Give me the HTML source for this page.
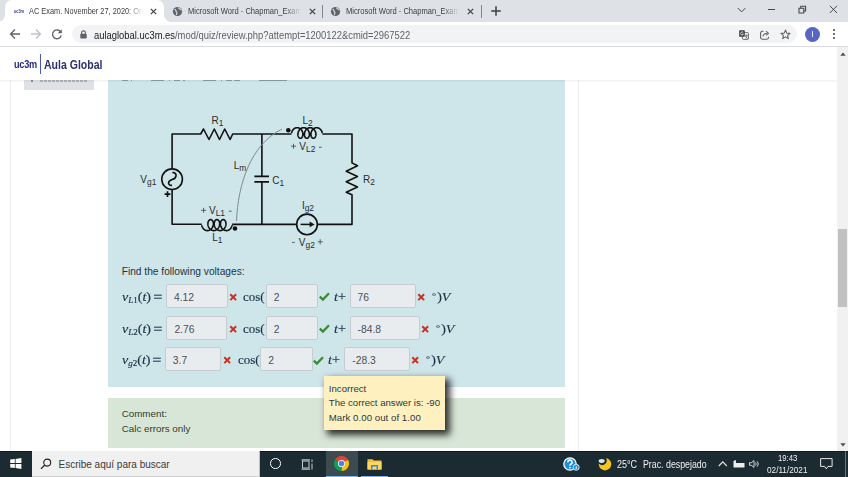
<!DOCTYPE html>
<html><head><meta charset="utf-8">
<style>
*{margin:0;padding:0;box-sizing:border-box}
html,body{width:848px;height:477px;overflow:hidden;background:#fff;font-family:"Liberation Sans",sans-serif;position:relative}
.a{position:absolute}
.clab{line-height:10px;color:#2b2b2b;white-space:nowrap}
.clab sub{font-size:8.4px;vertical-align:-1.8px;line-height:0}
.inp{height:24px;background:#e9ecef;border:1px solid #c5ccd2;border-radius:2px;font-size:10.3px;line-height:25px;padding-left:7px;color:#495057;white-space:nowrap}
.mth{font-family:"Liberation Serif",serif;font-size:12.6px;line-height:16px;color:#163444;transform:scaleX(1.12);transform-origin:0 0;-webkit-text-stroke:0.15px #163444;white-space:nowrap}
.deg{font-size:9px;position:relative;top:-1.5px;margin-right:1px}
.mth sub{font-size:8px;vertical-align:-2px;line-height:0}
.xm,.ck{width:11px;height:9px}
.a svg{display:block}
.tabtxt{font-size:11px;color:#3c4043;white-space:nowrap;overflow:hidden}
</style></head><body>
<!-- tab strip -->
<div class="a" style="left:0;top:0;width:848px;height:22px;background:#dee1e6"></div>
<div class="a" style="left:5px;top:0;width:159px;height:22px;background:#fff;border-radius:7px 7px 0 0"></div>
<div class="a" style="left:-3px;top:14px;width:8px;height:8px;background:radial-gradient(circle at 0 0,#dee1e6 8px,#fff 8px)"></div>
<div class="a" style="left:164px;top:14px;width:8px;height:8px;background:radial-gradient(circle at 100% 0,#dee1e6 8px,#fff 8px)"></div>
<!-- tab1 favicon -->
<div class="a" style="left:13.8px;top:8.6px;font-size:4.6px;line-height:6px;font-weight:bold;color:#3a3f9a;letter-spacing:-0.1px;transform:scaleX(0.85);transform-origin:0 0">uc3m</div>
<div class="a tabtxt" style="left:29px;top:6px;width:140px;font-size:9px;transform:scaleX(0.82);transform-origin:0 0;-webkit-mask-image:linear-gradient(90deg,#000 120px,transparent 140px)">AC Exam. November 27, 2020: Online</div>
<svg class="a" style="left:150px;top:8px" width="7" height="7" viewBox="0 0 7 7"><path d="M0.8 0.8L6.2 6.2M6.2 0.8L0.8 6.2" stroke="#3c4043" stroke-width="1.2"/></svg>
<!-- tab2 -->
<svg class="a" style="left:172px;top:6px" width="11" height="11" viewBox="0 0 11 11"><circle cx="5.5" cy="5.5" r="4.6" fill="#5f6368"/><path d="M2.5 3.2c1 .2 1.6.8 1.4 1.6-.2.7.8 1 1 1.8.2.6-.2 1.6-.7 2.4M6.8 1.5c-.4.8.2 1.4 1 1.4.8 0 1.4.6 1.2 1.4" stroke="#dee1e6" stroke-width="1.1" fill="none"/></svg>
<div class="a tabtxt" style="left:188px;top:6px;width:140px;font-size:9px;color:#3c4043;transform:scaleX(0.84);transform-origin:0 0;-webkit-mask-image:linear-gradient(90deg,#000 115px,transparent 135px)">Microsoft Word - Chapman_Exam</div>
<svg class="a" style="left:308.5px;top:7.5px" width="7" height="7" viewBox="0 0 7 7"><path d="M0.8 0.8L6.2 6.2M6.2 0.8L0.8 6.2" stroke="#3c4043" stroke-width="1.2"/></svg>
<div class="a" style="left:322px;top:5px;width:1px;height:13px;background:#80868b"></div>
<!-- tab3 -->
<svg class="a" style="left:330px;top:6px" width="11" height="11" viewBox="0 0 11 11"><circle cx="5.5" cy="5.5" r="4.6" fill="#5f6368"/><path d="M2.5 3.2c1 .2 1.6.8 1.4 1.6-.2.7.8 1 1 1.8.2.6-.2 1.6-.7 2.4M6.8 1.5c-.4.8.2 1.4 1 1.4.8 0 1.4.6 1.2 1.4" stroke="#dee1e6" stroke-width="1.1" fill="none"/></svg>
<div class="a tabtxt" style="left:346px;top:6px;width:140px;font-size:9px;color:#3c4043;transform:scaleX(0.84);transform-origin:0 0;-webkit-mask-image:linear-gradient(90deg,#000 115px,transparent 135px)">Microsoft Word - Chapman_Exam</div>
<svg class="a" style="left:466.5px;top:7.5px" width="7" height="7" viewBox="0 0 7 7"><path d="M0.8 0.8L6.2 6.2M6.2 0.8L0.8 6.2" stroke="#3c4043" stroke-width="1.2"/></svg>
<div class="a" style="left:481px;top:5px;width:1px;height:13px;background:#80868b"></div>
<svg class="a" style="left:490px;top:5px" width="12" height="12" viewBox="0 0 12 12"><path d="M6 1.2V10.8M1.2 6H10.8" stroke="#3c4043" stroke-width="1.5"/></svg>
<!-- window controls -->
<svg class="a" style="left:737px;top:7px" width="9" height="6" viewBox="0 0 9 6"><path d="M0.9 1.1L4.6 4.9L8.3 1.1" stroke="#45494d" stroke-width="1" fill="none"/></svg>
<div class="a" style="left:768.3px;top:9px;width:7.2px;height:1.1px;background:#45494d"></div>
<svg class="a" style="left:798px;top:5px" width="9" height="9" viewBox="0 0 9 9"><path d="M1 3.2h4.8V8H1z" stroke="#45494d" stroke-width="1.1" fill="none"/><path d="M2.8 3.2V1.2h4.8V6H5.8" stroke="#45494d" stroke-width="1.1" fill="none"/></svg>
<svg class="a" style="left:828.5px;top:5px" width="9" height="9" viewBox="0 0 9 9"><path d="M0.8 0.8L8 8M8 0.8L0.8 8" stroke="#45494d" stroke-width="1"/></svg>
<!-- toolbar -->
<div class="a" style="left:0;top:22px;width:848px;height:24px;background:#fff"></div>
<svg class="a" style="left:9px;top:28px" width="12" height="12" viewBox="0 0 12 12"><path d="M11 6H1.8M6 1.5L1.5 6L6 10.5" stroke="#5f6368" stroke-width="1.3" fill="none"/></svg>
<svg class="a" style="left:30px;top:28px" width="12" height="12" viewBox="0 0 12 12"><path d="M1 6H10.2M6 1.5L10.5 6L6 10.5" stroke="#bdc1c6" stroke-width="1.3" fill="none"/></svg>
<svg class="a" style="left:51px;top:28px" width="12" height="12" viewBox="0 0 12 12"><path d="M9.8 4.2A4.4 4.4 0 1 0 10.2 7.5" stroke="#5f6368" stroke-width="1.3" fill="none"/><path d="M10.8 1.2V5.3H6.7z" fill="#5f6368"/></svg>
<div class="a" style="left:72px;top:25px;width:725px;height:18px;background:#f1f3f4;border-radius:9px"></div>
<svg class="a" style="left:80px;top:30px" width="7" height="9" viewBox="0 0 7 9"><path d="M1.6 4V2.8a1.9 1.9 0 0 1 3.8 0V4" stroke="#5f6368" stroke-width="1.1" fill="none"/><rect x="0.3" y="3.8" width="6.4" height="4.6" rx="0.6" fill="#5f6368"/></svg>
<div class="a" style="left:94px;top:30px;font-size:10px;white-space:nowrap;color:#5f6368;transform:scaleX(0.94);transform-origin:0 0"><span style="color:#202124">aulaglobal.uc3m.es</span>/mod/quiz/review.php?attempt=1200122&amp;cmid=2967522</div>
<!-- translate icon -->
<svg class="a" style="left:738.5px;top:29.5px" width="10" height="10" viewBox="0 0 10 10"><rect x="3.6" y="2.6" width="5.8" height="6.8" rx="0.6" fill="#fff" stroke="#6a6e72" stroke-width="1"/><rect x="0.2" y="0.2" width="5.6" height="6.6" rx="0.6" fill="#3c4043"/><path d="M4.3 2.6A1.5 1.5 0 1 0 4.4 4.2H3" stroke="#fff" stroke-width="0.8" fill="none"/><path d="M6 5.2H8.6M7.3 4.6V5.2M6.6 8.4C7.6 7.6 8.1 6.6 8.2 5.2M6.4 6.2C6.9 7.4 7.6 8.1 8.6 8.5" stroke="#3c4043" stroke-width="0.7" fill="none"/></svg>
<!-- share icon -->
<svg class="a" style="left:759.5px;top:29.8px" width="10" height="10" viewBox="0 0 10 10"><path d="M3.6 1.3H2.2A1.6 1.6 0 0 0 0.6 2.9V7.6A1.6 1.6 0 0 0 2.2 9.2H6.9A1.6 1.6 0 0 0 8.5 7.6V6.8" stroke="#5f6368" stroke-width="1.1" fill="none"/><path d="M3 6.4C3.3 4.4 4.7 3.3 7.3 3.3M6 1.2L8.5 3.3L6 5.4" stroke="#5f6368" stroke-width="1.1" fill="none" stroke-linejoin="round"/></svg>
<!-- star -->
<svg class="a" style="left:780px;top:28.5px" width="11" height="11" viewBox="0 0 11 11"><path d="M5.5 1.1L6.8 4.1 10 4.3 7.6 6.4 8.3 9.6 5.5 7.9 2.7 9.6 3.4 6.4 1 4.3 4.2 4.1Z" stroke="#5f6368" stroke-width="1.1" fill="none" stroke-linejoin="round"/></svg>
<!-- profile -->
<div class="a" style="left:805px;top:27px;width:15px;height:15px;border-radius:50%;background:#5865c2"></div>
<div class="a" style="left:812px;top:31px;width:1px;height:6px;background:#e8eaf6"></div>
<!-- menu dots -->
<div class="a" style="left:832.5px;top:29px;width:2px;height:2px;border-radius:1px;background:#3c4043"></div>
<div class="a" style="left:832.5px;top:33px;width:2px;height:2px;border-radius:1px;background:#3c4043"></div>
<div class="a" style="left:832.5px;top:37px;width:2px;height:2px;border-radius:1px;background:#3c4043"></div>
<div class="a" style="left:0;top:46px;width:848px;height:1px;background:#dadce0"></div>
<!-- page -->
<div class="a" style="left:10px;top:47px;width:1px;height:404px;background:#eeeeee"></div>
<div class="a" style="left:578px;top:80px;width:1px;height:371px;background:#efefef"></div>
<div class="a" style="left:24px;top:70px;width:70px;height:20px;background:#dee2e6"></div>
<div class="a" style="left:108px;top:80px;width:457px;height:306.6px;background:#cee5ea"></div>
<div class="a" style="left:108px;top:398px;width:457px;height:49.5px;background:#d8e6d8"></div>
<!-- circuit -->
<svg class="a" style="left:0;top:0" width="848" height="477" viewBox="0 0 848 477">
<path fill="none" stroke="#111" stroke-width="1.6" stroke-linejoin="round" d="M172.1,168.8 V134 H200.7 L203.5,129 L209,139.5 L214.3,129 L219.5,139.5 L224.7,129 L230.1,139.5 L232.7,134 H291.52"/>
<path fill="none" stroke="#111" stroke-width="1.6" stroke-linejoin="round" d="M322.29,134 H352 V162.9 L357.5,165.8 L346.2,171.2 L357.5,176.5 L346.2,181.7 L357.5,187 L346.2,192.2 L352,194.8 V224.4 H317.9"/>
<path fill="none" stroke="#111" stroke-width="1.6" stroke-linejoin="round" d="M296,224.4 H232.12"/>
<path fill="none" stroke="#111" stroke-width="1.6" stroke-linejoin="round" d="M201.73,224.2 H172.1 V189.8"/>
<path fill="none" stroke="#111" stroke-width="1.6" stroke-linejoin="round" d="M261.9,134 V176.4 M261.9,181.9 V224.4"/>
<path fill="none" stroke="#111" stroke-width="1.6" stroke-linejoin="round" d="M254.4,176.4 H269 M254.4,181.9 H269"/>
<path fill="none" stroke="#111" stroke-width="1.6" stroke-linejoin="round" d="M201.73,225.10 L201.85,225.65 L202.01,226.19 L202.22,226.72 L202.46,227.24 L202.74,227.74 L203.06,228.20 L203.42,228.64 L203.80,229.04 L204.22,229.41 L204.66,229.73 L205.12,230.00 L205.60,230.23 L206.10,230.40 L206.61,230.52 L207.13,230.59 L207.65,230.60 L208.17,230.55 L208.68,230.46 L209.18,230.31 L209.67,230.10 L210.15,229.85 L210.60,229.55 L211.02,229.20 L211.42,228.82 L211.79,228.40 L212.12,227.94 L212.42,227.46 L212.68,226.95 L212.90,226.42 L213.09,225.88 L213.22,225.34 L213.32,224.79 L213.38,224.24 L213.39,223.70 L213.36,223.18 L213.30,222.67 L213.19,222.19 L213.05,221.74 L212.88,221.32 L212.68,220.94 L212.45,220.60 L212.19,220.31 L211.92,220.06 L211.63,219.87 L211.32,219.73 L211.01,219.64 L210.69,219.60 L210.37,219.62 L210.05,219.69 L209.74,219.82 L209.45,220.00 L209.17,220.24 L208.91,220.52 L208.67,220.84 L208.46,221.21 L208.28,221.62 L208.13,222.06 L208.01,222.53 L207.94,223.03 L207.90,223.55 L207.90,224.08 L207.94,224.63 L208.03,225.18 L208.15,225.73 L208.32,226.27 L208.53,226.80 L208.78,227.31 L209.07,227.80 L209.39,228.27 L209.75,228.70 L210.14,229.10 L210.56,229.46 L211.01,229.77 L211.47,230.04 L211.96,230.25 L212.46,230.42 L212.97,230.53 L213.49,230.59 L214.01,230.59 L214.52,230.54 L215.04,230.44 L215.54,230.28 L216.02,230.07 L216.49,229.81 L216.94,229.50 L217.37,229.15 L217.76,228.76 L218.12,228.33 L218.45,227.87 L218.75,227.38 L219.00,226.87 L219.22,226.35 L219.39,225.80 L219.52,225.26 L219.61,224.71 L219.66,224.16 L219.67,223.63 L219.64,223.10 L219.57,222.60 L219.46,222.13 L219.31,221.68 L219.14,221.27 L218.93,220.89 L218.70,220.56 L218.44,220.27 L218.16,220.03 L217.87,219.85 L217.56,219.71 L217.24,219.63 L216.92,219.60 L216.61,219.63 L216.29,219.71 L215.98,219.85 L215.69,220.03 L215.41,220.27 L215.15,220.56 L214.92,220.89 L214.71,221.27 L214.54,221.68 L214.39,222.13 L214.28,222.60 L214.21,223.10 L214.18,223.63 L214.19,224.16 L214.23,224.71 L214.33,225.26 L214.46,225.80 L214.63,226.35 L214.85,226.87 L215.10,227.38 L215.40,227.87 L215.73,228.33 L216.09,228.76 L216.48,229.15 L216.91,229.50 L217.35,229.81 L217.82,230.07 L218.31,230.28 L218.81,230.44 L219.33,230.54 L219.84,230.59 L220.36,230.59 L220.88,230.53 L221.39,230.42 L221.89,230.25 L222.38,230.04 L222.84,229.77 L223.29,229.46 L223.71,229.10 L224.10,228.70 L224.46,228.27 L224.78,227.80 L225.07,227.31 L225.32,226.80 L225.53,226.27 L225.70,225.73 L225.82,225.18 L225.91,224.63 L225.95,224.08 L225.95,223.55 L225.91,223.03 L225.84,222.53 L225.72,222.06 L225.57,221.62 L225.39,221.21 L225.18,220.84 L224.94,220.52 L224.68,220.24 L224.40,220.00 L224.11,219.82 L223.80,219.69 L223.48,219.62 L223.16,219.60 L222.84,219.64 L222.53,219.73 L222.22,219.87 L221.93,220.06 L221.66,220.31 L221.40,220.60 L221.17,220.94 L220.97,221.32 L220.80,221.74 L220.66,222.19 L220.55,222.67 L220.49,223.18 L220.46,223.70 L220.47,224.24 L220.53,224.79 L220.63,225.34 L220.76,225.88 L220.94,226.42 L221.17,226.95 L221.43,227.46 L221.72,227.94 L222.06,228.40 L222.43,228.82 L222.83,229.20 L223.25,229.55 L223.70,229.85 L224.18,230.10 L224.67,230.31 L225.17,230.46 L225.68,230.55 L226.20,230.60 L226.72,230.59 L227.24,230.52 L227.75,230.40 L228.24,230.23 L228.73,230.00 L229.19,229.73 L229.63,229.41 L230.05,229.04 L230.43,228.64 L230.79,228.20 L231.11,227.74 L231.39,227.24 L231.63,226.72 L231.84,226.19 L232.00,225.65 L232.12,225.10"/>
<path fill="none" stroke="#111" stroke-width="1.6" stroke-linejoin="round" d="M291.52,133.00 L291.65,132.47 L291.81,131.95 L292.01,131.43 L292.25,130.94 L292.53,130.46 L292.84,130.01 L293.19,129.59 L293.56,129.20 L293.97,128.85 L294.40,128.54 L294.85,128.28 L295.31,128.06 L295.80,127.89 L296.29,127.78 L296.79,127.71 L297.29,127.70 L297.80,127.74 L298.29,127.84 L298.78,127.98 L299.26,128.18 L299.71,128.42 L300.15,128.71 L300.57,129.04 L300.95,129.42 L301.31,129.82 L301.64,130.26 L301.93,130.73 L302.19,131.22 L302.41,131.73 L302.59,132.25 L302.73,132.77 L302.83,133.30 L302.89,133.83 L302.91,134.35 L302.89,134.85 L302.84,135.34 L302.75,135.80 L302.62,136.24 L302.47,136.64 L302.28,137.01 L302.07,137.33 L301.84,137.61 L301.58,137.85 L301.31,138.04 L301.03,138.18 L300.74,138.27 L300.44,138.30 L300.15,138.28 L299.86,138.21 L299.57,138.09 L299.30,137.91 L299.04,137.69 L298.80,137.42 L298.58,137.10 L298.39,136.75 L298.22,136.35 L298.09,135.93 L297.99,135.47 L297.92,134.99 L297.89,134.49 L297.90,133.98 L297.95,133.45 L298.04,132.92 L298.17,132.40 L298.34,131.87 L298.55,131.36 L298.79,130.87 L299.08,130.39 L299.39,129.95 L299.74,129.53 L300.12,129.15 L300.53,128.80 L300.96,128.50 L301.42,128.24 L301.89,128.03 L302.37,127.87 L302.86,127.77 L303.37,127.71 L303.87,127.70 L304.37,127.75 L304.87,127.86 L305.35,128.01 L305.82,128.21 L306.28,128.46 L306.72,128.76 L307.13,129.10 L307.51,129.47 L307.86,129.88 L308.19,130.33 L308.47,130.80 L308.73,131.29 L308.94,131.80 L309.11,132.32 L309.25,132.85 L309.34,133.38 L309.40,133.90 L309.41,134.42 L309.39,134.92 L309.33,135.41 L309.24,135.87 L309.11,136.30 L308.95,136.69 L308.76,137.05 L308.54,137.38 L308.30,137.65 L308.05,137.88 L307.78,138.06 L307.49,138.19 L307.20,138.27 L306.90,138.30 L306.61,138.27 L306.32,138.19 L306.03,138.06 L305.76,137.88 L305.50,137.65 L305.27,137.38 L305.05,137.05 L304.86,136.69 L304.70,136.30 L304.57,135.87 L304.48,135.41 L304.42,134.92 L304.40,134.42 L304.41,133.90 L304.47,133.38 L304.56,132.85 L304.70,132.32 L304.87,131.80 L305.08,131.29 L305.34,130.80 L305.62,130.33 L305.94,129.88 L306.30,129.47 L306.68,129.10 L307.09,128.76 L307.53,128.46 L307.98,128.21 L308.46,128.01 L308.94,127.86 L309.44,127.75 L309.94,127.70 L310.44,127.71 L310.94,127.77 L311.44,127.87 L311.92,128.03 L312.39,128.24 L312.85,128.50 L313.28,128.80 L313.69,129.15 L314.07,129.53 L314.42,129.95 L314.73,130.39 L315.02,130.87 L315.26,131.36 L315.47,131.87 L315.64,132.40 L315.77,132.92 L315.86,133.45 L315.91,133.98 L315.92,134.49 L315.89,134.99 L315.82,135.47 L315.72,135.93 L315.59,136.35 L315.42,136.75 L315.23,137.10 L315.01,137.42 L314.77,137.69 L314.51,137.91 L314.24,138.09 L313.95,138.21 L313.66,138.28 L313.37,138.30 L313.07,138.27 L312.78,138.18 L312.50,138.04 L312.23,137.85 L311.97,137.61 L311.74,137.33 L311.53,137.01 L311.34,136.64 L311.19,136.24 L311.06,135.80 L310.97,135.34 L310.92,134.85 L310.90,134.35 L310.92,133.83 L310.98,133.30 L311.08,132.77 L311.22,132.25 L311.40,131.73 L311.62,131.22 L311.88,130.73 L312.17,130.26 L312.50,129.82 L312.86,129.42 L313.24,129.04 L313.66,128.71 L314.10,128.42 L314.55,128.18 L315.03,127.98 L315.52,127.84 L316.01,127.74 L316.52,127.70 L317.02,127.71 L317.52,127.78 L318.01,127.89 L318.49,128.06 L318.96,128.28 L319.41,128.54 L319.84,128.85 L320.25,129.20 L320.62,129.59 L320.97,130.01 L321.28,130.46 L321.56,130.94 L321.80,131.43 L322.00,131.95 L322.16,132.47 L322.29,133.00"/>
<circle cx="172.1" cy="179.2" r="10.3" fill="none" stroke="#111" stroke-width="1.6" stroke-linejoin="round"/>
<path fill="none" stroke="#111" stroke-width="1.6" d="M172.4,172.4 C177.6,172.8 177,178.2 172.2,179.6 C167.4,181 167.4,185.6 172,185.4"/>
<circle cx="307" cy="224.4" r="10.3" fill="none" stroke="#111" stroke-width="1.6" stroke-linejoin="round"/>
<path stroke="#111" stroke-width="1.5" d="M300.6,224.4 H311"/><path fill="#111" d="M309.6,221.6 L314.6,224.4 L309.6,227.2Z"/>
<circle cx="235" cy="228.5" r="2.3" fill="#111"/><circle cx="288.3" cy="130.3" r="2.3" fill="#111"/>
<path fill="none" stroke="#7f8b8f" stroke-width="1" d="M236.5,221 C238,185 250,145 282,129"/>
<path stroke="#111" stroke-width="1.7" d="M164.6,194.2 H170.4 M167.5,191.3 V197.1"/>
</svg>
<div class="a clab" style="left:211.4px;top:116.1px;font-size:10px">R<sub>1</sub></div>
<div class="a clab" style="left:302.4px;top:115.7px;font-size:10px">L<sub>2</sub></div>
<div class="a clab" style="left:362.9px;top:174.9px;font-size:10px">R<sub>2</sub></div>
<div class="a clab" style="left:272.2px;top:175.6px;font-size:10px">C<sub>1</sub></div>
<div class="a clab" style="left:233.8px;top:160.6px;font-size:10px">L<sub>m</sub></div>
<div class="a clab" style="left:140.3px;top:174.8px;font-size:10px">V<sub>g1</sub></div>
<div class="a clab" style="left:301.9px;top:201.4px;font-size:10px">I<sub>g2</sub></div>
<div class="a clab" style="left:212.3px;top:232.8px;font-size:10px">L<sub>1</sub></div>
<div class="a clab" style="left:209px;top:206.4px;font-size:10px">V<sub>L1</sub></div>
<div class="a clab" style="left:299.3px;top:141.8px;font-size:10px">V<sub>L2</sub></div>
<div class="a clab" style="left:298.8px;top:237.8px;font-size:10px">V<sub>g2</sub></div>
<svg class="a" style="left:0;top:0" width="848" height="477"><path d="M201.1,210.3 H206.1 M203.6,207.8 V212.8" stroke="#4a5255" stroke-width="0.9"/><path d="M228.79999999999998,211.2 H231.6" stroke="#4a5255" stroke-width="0.9"/><path d="M291.0,146.2 H296.0 M293.5,143.7 V148.7" stroke="#4a5255" stroke-width="0.9"/><path d="M319.0,147.2 H321.79999999999995" stroke="#4a5255" stroke-width="0.9"/><path d="M292.0,242.4 H294.79999999999995" stroke="#4a5255" stroke-width="0.9"/><path d="M317.7,241.8 H322.7 M320.2,239.3 V244.3" stroke="#4a5255" stroke-width="0.9"/></svg>
<!-- /circuit -->
<!-- content -->
<div class="a" style="left:121.7px;top:266.3px;font-size:10.2px;line-height:12px;color:#1e3440;white-space:nowrap">Find the following voltages:</div>
<!-- rows -->
<div class="a mth" style="left:121.5px;top:288.6px"><i>v</i><sub><i>L</i>1</sub>(<i>t</i>)</div>
<div class="a inp" style="left:166.0px;top:284.0px;width:62.0px">4.12</div>
<div class="a xm" style="left:228.6px;top:293.1px"><svg width="10" height="9"><path d="M1.3 1.3L7.1 7.1M7.1 1.3L1.3 7.1" stroke="#ca3120" stroke-width="2"/></svg></div>
<div class="a mth" style="left:243.3px;top:288.6px;transform:scaleX(1.03)">cos(</div>
<div class="a inp" style="left:265.8px;top:284.0px;width:51.9px">2</div>
<div class="a ck" style="left:318.8px;top:291.9px"><svg width="11" height="9"><path d="M0.8 4.6L3.9 7.6L10 1.3" stroke="#3b8a36" stroke-width="2.3" fill="none"/></svg></div>
<div class="a mth" style="left:334.0px;top:288.6px"><i>t</i>+</div>
<div class="a inp" style="left:349.5px;top:284.0px;width:66.3px">76</div>
<div class="a xm" style="left:417.0px;top:293.1px"><svg width="10" height="9"><path d="M1.3 1.3L7.1 7.1M7.1 1.3L1.3 7.1" stroke="#ca3120" stroke-width="2"/></svg></div>
<div class="a mth" style="left:431.6px;top:288.6px"><span class="deg">°</span>)<i>V</i></div>
<div class="a mth" style="left:121.5px;top:320.6px"><i>v</i><sub><i>L</i>2</sub>(<i>t</i>)</div>
<div class="a inp" style="left:166.4px;top:316.0px;width:61.0px">2.76</div>
<div class="a xm" style="left:228.7px;top:325.1px"><svg width="10" height="9"><path d="M1.3 1.3L7.1 7.1M7.1 1.3L1.3 7.1" stroke="#ca3120" stroke-width="2"/></svg></div>
<div class="a mth" style="left:243.3px;top:320.6px;transform:scaleX(1.03)">cos(</div>
<div class="a inp" style="left:265.8px;top:316.0px;width:51.9px">2</div>
<div class="a ck" style="left:318.8px;top:323.9px"><svg width="11" height="9"><path d="M0.8 4.6L3.9 7.6L10 1.3" stroke="#3b8a36" stroke-width="2.3" fill="none"/></svg></div>
<div class="a mth" style="left:334.0px;top:320.6px"><i>t</i>+</div>
<div class="a inp" style="left:349.5px;top:316.0px;width:70.3px">-84.8</div>
<div class="a xm" style="left:421.4px;top:325.1px"><svg width="10" height="9"><path d="M1.3 1.3L7.1 7.1M7.1 1.3L1.3 7.1" stroke="#ca3120" stroke-width="2"/></svg></div>
<div class="a mth" style="left:435.6px;top:320.6px"><span class="deg">°</span>)<i>V</i></div>
<div class="a mth" style="left:121.5px;top:351.8px"><i>v</i><sub><i>g</i>2</sub>(<i>t</i>)</div>
<div class="a inp" style="left:164.8px;top:347.2px;width:56.3px">3.7</div>
<div class="a xm" style="left:222.5px;top:356.3px"><svg width="10" height="9"><path d="M1.3 1.3L7.1 7.1M7.1 1.3L1.3 7.1" stroke="#ca3120" stroke-width="2"/></svg></div>
<div class="a mth" style="left:237.7px;top:351.8px;transform:scaleX(1.03)">cos(</div>
<div class="a inp" style="left:260.2px;top:347.2px;width:52.4px">2</div>
<div class="a ck" style="left:312.9px;top:355.5px"><svg width="11" height="9"><path d="M0.8 4.6L3.9 7.6L10 1.3" stroke="#3b8a36" stroke-width="2.3" fill="none"/></svg></div>
<div class="a mth" style="left:328.0px;top:351.8px"><i>t</i>+</div>
<div class="a inp" style="left:344.3px;top:347.2px;width:65.4px">-28.3</div>
<div class="a xm" style="left:411.1px;top:356.3px"><svg width="10" height="9"><path d="M1.3 1.3L7.1 7.1M7.1 1.3L1.3 7.1" stroke="#ca3120" stroke-width="2"/></svg></div>
<div class="a mth" style="left:425.6px;top:351.8px"><span class="deg">°</span>)<i>V</i></div>
<svg class="a" style="left:154.4px;top:293.7px" width="8" height="5"><path d="M0 1.2H7.8M0 4.2H7.8" stroke="#163444" stroke-width="1"/></svg>
<svg class="a" style="left:154.4px;top:325.7px" width="8" height="5"><path d="M0 1.2H7.8M0 4.2H7.8" stroke="#163444" stroke-width="1"/></svg>
<svg class="a" style="left:153.2px;top:356.9px" width="8" height="5"><path d="M0 1.2H7.8M0 4.2H7.8" stroke="#163444" stroke-width="1"/></svg>
<!-- comment -->
<div class="a" style="left:121.7px;top:407px;font-size:9.8px;line-height:14.6px;color:#2f3d30;white-space:nowrap">Comment:<br>Calc errors only</div>
<!-- /content -->
<!-- partial --><div class="a" style="left:122px;top:80px;width:6px;height:1.2px;background:#4a5d66;opacity:.5"></div><div class="a" style="left:130.5px;top:80px;width:1.5px;height:1.2px;background:#4a5d66;opacity:.5"></div><div class="a" style="left:151px;top:80px;width:13px;height:1.2px;background:#4a5d66;opacity:.5"></div><div class="a" style="left:169px;top:80px;width:1px;height:1.2px;background:#4a5d66;opacity:.5"></div><div class="a" style="left:174px;top:80px;width:6px;height:1.2px;background:#4a5d66;opacity:.5"></div><div class="a" style="left:183px;top:80px;width:2px;height:1.2px;background:#4a5d66;opacity:.5"></div><div class="a" style="left:203px;top:80px;width:13px;height:1.2px;background:#4a5d66;opacity:.5"></div><div class="a" style="left:221px;top:80px;width:1px;height:1.2px;background:#4a5d66;opacity:.5"></div><div class="a" style="left:226px;top:80px;width:6px;height:1.2px;background:#4a5d66;opacity:.5"></div><div class="a" style="left:234px;top:80px;width:6px;height:1.2px;background:#4a5d66;opacity:.5"></div><div class="a" style="left:259px;top:80px;width:28px;height:1.2px;background:#4a5d66;opacity:.5"></div><div class="a" style="left:31px;top:80px;width:1.5px;height:2px;background:#555;opacity:.6"></div><div class="a" style="left:40px;top:80px;width:48px;height:1.5px;background:repeating-linear-gradient(90deg,#6a6f74 0 3px,transparent 3px 4px);opacity:.4"></div>
<!-- header -->
<div class="a" style="left:0;top:47px;width:837px;height:33px;background:#fff;box-shadow:0 1px 2px rgba(0,0,0,.08)"></div>
<!-- scrollbar -->
<div class="a" style="left:837px;top:47px;width:11px;height:404px;background:#f1f1f1"></div>
<div class="a" style="left:838px;top:229px;width:9px;height:78px;background:#c1c1c1"></div>
<!-- header content -->
<div class="a" style="left:14px;top:58.6px;font-size:10.2px;font-weight:bold;color:#232d82;letter-spacing:-0.3px;transform:scaleX(0.9);transform-origin:0 0">uc3m</div>
<div class="a" style="left:40px;top:54px;width:1.2px;height:19.5px;background:#4d58a8"></div>
<div class="a" style="left:44px;top:57.3px;font-size:13px;font-weight:bold;color:#2b2f6e;white-space:nowrap;transform:scaleX(0.81);transform-origin:0 0">Aula Global</div>
<!-- tooltip -->
<div class="a" style="left:324px;top:376px;width:121px;height:53.5px;background:#fff1bf;box-shadow:4px 4px 7px 1px rgba(0,0,0,.8)"></div>
<div class="a" style="left:328.8px;top:381.8px;font-size:9.65px;line-height:14.6px;color:#2c3840;white-space:nowrap">Incorrect<br>The correct answer is: -90<br><span style="letter-spacing:0.05px">Mark 0.00 out of 1.00</span></div>
<!-- taskbar -->
<div class="a" style="left:0;top:451px;width:848px;height:26px;background:#1c2b31;border-top:1px solid #0d1b20"></div>
<div class="a" style="left:32px;top:451px;width:228px;height:26px;background:#f0f0f0;border-right:1px solid #bfbfbf;border-bottom:1px solid #cfcfcf"></div>
<svg class="a" style="left:10px;top:458px" width="12" height="11" viewBox="0 0 12 11"><path d="M0.2 1.6L4.8 1V5.1H0.2Z M5.6 0.9L11.4 0.1V5.1H5.6Z M0.2 5.9H4.8V10L0.2 9.4Z M5.6 5.9H11.4V10.9L5.6 10.1Z" fill="#fff"/></svg>
<svg class="a" style="left:39.5px;top:458px" width="12" height="12" viewBox="0 0 12 12"><circle cx="7.2" cy="4.6" r="3.5" stroke="#222" stroke-width="1.1" fill="none"/><path d="M4.7 7.1L1 10.8" stroke="#222" stroke-width="1.3"/></svg>
<div class="a" style="left:58.5px;top:458.5px;font-size:10px;color:#3a3a3a;white-space:nowrap">Escribe aquí para buscar</div>
<div class="a" style="left:270.2px;top:458.3px;width:10.6px;height:10.6px;border-radius:50%;border:1.7px solid #fff"></div>
<svg class="a" style="left:301px;top:458.5px" width="13" height="11" viewBox="0 0 13 11"><rect x="1.5" y="2" width="6.5" height="7" stroke="#c9cccd" stroke-width="1" fill="none"/><path d="M0.5 0.8H9 M0.5 10.2H9 M11 0.5V3 M11 4.5V10.5" stroke="#c9cccd" stroke-width="1"/></svg>
<div class="a" style="left:325.7px;top:451px;width:32.5px;height:26px;background:#3d4a4f"></div>
<div class="a" style="left:325.7px;top:475.5px;width:32.5px;height:1.5px;background:#76b9ed"></div>
<svg class="a" style="left:333.8px;top:456.3px" width="15" height="15" viewBox="-7.5 -7.5 15 15"><path d="M0 0L-6.5 -3.75A7.5 7.5 0 0 1 6.5 -3.75Z" fill="#db4437"/><path d="M0 0L6.5 -3.75A7.5 7.5 0 0 1 0 7.5Z" fill="#f4c20d"/><path d="M0 0L0 7.5A7.5 7.5 0 0 1 -6.5 -3.75Z" fill="#0f9d58"/><circle r="3.6" fill="#fff"/><circle r="2.8" fill="#4285f4"/></svg>
<div class="a" style="left:361.2px;top:475.5px;width:26.7px;height:1.5px;background:#76b9ed"></div>
<svg class="a" style="left:367px;top:458px" width="15" height="12" viewBox="0 0 15 12"><path d="M0.5 1.2H5.5L6.8 2.5H14.5V11.5H0.5Z" fill="#f3c13a"/><path d="M0.5 4H14.5V11.5H0.5Z" fill="#ffd75e"/><path d="M4 7H11V11.5H9.5V8.5H5.5V11.5H4Z" fill="#2c8fd6"/></svg>
<!-- tray -->
<svg class="a" style="left:563px;top:457.3px" width="17" height="14" viewBox="0 0 17 14"><circle cx="7" cy="7" r="6.2" fill="#1b8fdc" stroke="#fff" stroke-width="1.3"/><path d="M4.9 5.2A2.1 2.1 0 1 1 7.6 7.2C7 7.5 7 8 7 8.7" stroke="#fff" stroke-width="1.5" fill="none"/><circle cx="7" cy="10.6" r="0.9" fill="#fff"/><circle cx="13.2" cy="10.3" r="3" fill="#1b8fdc" stroke="#fff" stroke-width="0.8"/><path d="M13.2 9.3V12" stroke="#fff" stroke-width="1"/></svg>
<svg class="a" style="left:597px;top:457px" width="15" height="14" viewBox="0 0 15 14"><circle cx="8" cy="7.2" r="6.2" fill="#f5c518"/><circle cx="5.2" cy="3.6" r="4.6" fill="#1c2b31"/><ellipse cx="4.6" cy="4" rx="3" ry="1.9" fill="#d6e4ee"/></svg>
<div class="a" style="left:617px;top:458.5px;font-size:10px;color:#f0f0f0;white-space:nowrap;transform:scaleX(0.9);transform-origin:0 0">25°C</div>
<div class="a" style="left:642.6px;top:458.5px;font-size:10px;color:#f0f0f0;white-space:nowrap;transform:scaleX(0.88);transform-origin:0 0">Prac. despejado</div>
<svg class="a" style="left:718px;top:460px" width="10" height="7" viewBox="0 0 10 7"><path d="M0.8 6L4.8 1.8L8.8 6" stroke="#e8e8e8" stroke-width="1.1" fill="none"/></svg>
<svg class="a" style="left:732.5px;top:459.5px" width="12" height="8" viewBox="0 0 12 8"><path d="M0.5 1H3V3H11.5V7.5H0.5Z" fill="#eee"/><path d="M1.5 0.5H2.5V1.5" stroke="#eee"/></svg>
<svg class="a" style="left:749px;top:459.5px" width="10" height="8" viewBox="0 0 10 8"><path d="M0.5 2.7H2.3L5 0.6V7.4L2.3 5.3H0.5Z" stroke="#e8e8e8" stroke-width="0.9" fill="none"/><path d="M6.6 2.6A2 2 0 0 1 6.6 5.4 M8.2 1.4A3.8 3.8 0 0 1 8.2 6.6" stroke="#e8e8e8" stroke-width="0.9" fill="none"/></svg>
<div class="a" style="left:778px;top:452.5px;font-size:8.6px;line-height:10px;color:#f0f0f0;white-space:nowrap;transform:scaleX(0.9);transform-origin:0 0">19:43</div>
<div class="a" style="left:766.6px;top:464.8px;font-size:8.6px;line-height:10px;color:#f0f0f0;white-space:nowrap;transform:scaleX(0.955);transform-origin:0 0">02/11/2021</div>
<svg class="a" style="left:819.5px;top:457.5px" width="13" height="12" viewBox="0 0 13 12"><path d="M0.6 0.6H12.1V8.4H8L6.3 10.8L4.6 8.4H0.6Z" stroke="#e8e8e8" stroke-width="1" fill="none"/></svg>
<div class="a" style="left:844.5px;top:451px;width:1px;height:26px;background:#6b7579"></div>
<!-- scroll arrows -->
<svg class="a" style="left:840px;top:51.5px" width="6" height="4" viewBox="0 0 6 4"><path d="M0.3 3.8L3 0.6L5.7 3.8Z" fill="#505050"/></svg>
<svg class="a" style="left:840px;top:443px" width="6" height="4" viewBox="0 0 6 4"><path d="M0.3 0.2L3 3.4L5.7 0.2Z" fill="#505050"/></svg>
<!-- /rest -->
</body></html>
